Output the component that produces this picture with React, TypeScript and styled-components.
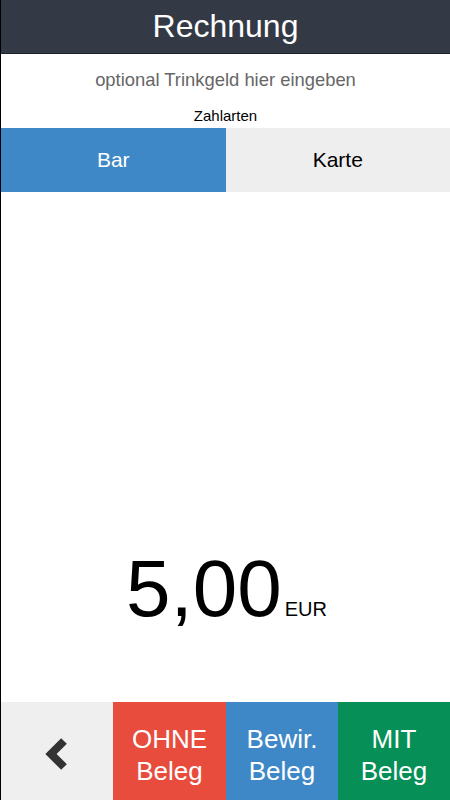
import React, { useState } from 'react'
import styled, { createGlobalStyle } from 'styled-components'

const GlobalStyle = createGlobalStyle`
  html, body {
    margin: 0;
    padding: 0;
    background: #fff;
  }
  body {
    font-family: "Liberation Sans", Arial, Helvetica, sans-serif;
  }
`

const StyledPage = styled.div`
  display: flex;
  flex-direction: column;
  height: 800px;
  width: 450px;
  box-sizing: border-box;
  border-left: 1px solid #000;
  overflow: hidden;
`

const StyledHeader = styled.div`
  display: flex;
  align-items: center;
  justify-content: center;
  height: 53px;
  background: #343a45;
  border-bottom: 1px solid #1d2128;
  color: #fff;
  font-size: 32px;
`

const StyledHint = styled.div`
  margin-top: 14px;
  height: 24px;
  line-height: 24px;
  text-align: center;
  font-size: 18.4px;
  color: #666;
`

const StyledLabel = styled.div`
  margin-top: 15px;
  height: 18px;
  line-height: 18px;
  text-align: center;
  font-size: 15px;
  color: #000;
`

const StyledTabs = styled.div`
  display: flex;
  margin-top: 3px;
  height: 64px;
`

const StyledTab = styled.div<{ $active: boolean }>`
  flex: 1;
  display: flex;
  align-items: center;
  justify-content: center;
  font-size: 21px;
  cursor: pointer;
  background: ${(props) => (props.$active ? '#3f88c8' : '#eeeeee')};
  color: ${(props) => (props.$active ? '#fff' : '#000')};
`

const StyledAmountArea = styled.div`
  flex: 1;
  display: flex;
  flex-direction: column;
  justify-content: flex-end;
  align-items: center;
  padding-bottom: 73px;
`

const StyledAmount = styled.div`
  display: flex;
  align-items: baseline;
  line-height: 1;
  color: #000;
  padding-left: 2px;
`

const StyledValue = styled.span`
  font-size: 80px;
`

const StyledCurrency = styled.span`
  font-size: 20px;
  margin-left: 3px;
`

const StyledActions = styled.div`
  display: grid;
  grid-template-columns: 112px 113px 112px 112px;
  height: 98px;
`

const StyledAction = styled.button<{ $color: string }>`
  display: flex;
  flex-direction: column;
  align-items: center;
  justify-content: center;
  border: none;
  margin: 0;
  padding: 8px 0 0;
  background: ${(props) => props.$color};
  color: #fff;
  font-family: inherit;
  font-size: 26px;
  line-height: 32px;
  cursor: pointer;
`

const BackIcon = () => (
  <svg width="24" height="34" viewBox="0 0 24 34">
    <polyline
      points="19,3 6,16 19,29"
      fill="none"
      stroke="#333"
      strokeWidth="8"
      strokeLinejoin="miter"
    />
  </svg>
)

const App: React.FC = () => {
  const [method, setMethod] = useState('bar')

  return (
    <>
      <GlobalStyle />
      <StyledPage>
        <StyledHeader>Rechnung</StyledHeader>
        <StyledHint>optional Trinkgeld hier eingeben</StyledHint>
        <StyledLabel>Zahlarten</StyledLabel>
        <StyledTabs>
          <StyledTab $active={method === 'bar'} onClick={() => setMethod('bar')}>Bar</StyledTab>
          <StyledTab $active={method === 'karte'} onClick={() => setMethod('karte')}>Karte</StyledTab>
        </StyledTabs>
        <StyledAmountArea>
          <StyledAmount>
            <StyledValue>5,00</StyledValue>
            <StyledCurrency>EUR</StyledCurrency>
          </StyledAmount>
        </StyledAmountArea>
        <StyledActions>
          <StyledAction $color="#efefef">
            <BackIcon />
          </StyledAction>
          <StyledAction $color="#e74c3c">
            <span>OHNE</span>
            <span>Beleg</span>
          </StyledAction>
          <StyledAction $color="#3f88c8">
            <span>Bewir.</span>
            <span>Beleg</span>
          </StyledAction>
          <StyledAction $color="#078f58">
            <span>MIT</span>
            <span>Beleg</span>
          </StyledAction>
        </StyledActions>
      </StyledPage>
    </>
  )
}

export default App
